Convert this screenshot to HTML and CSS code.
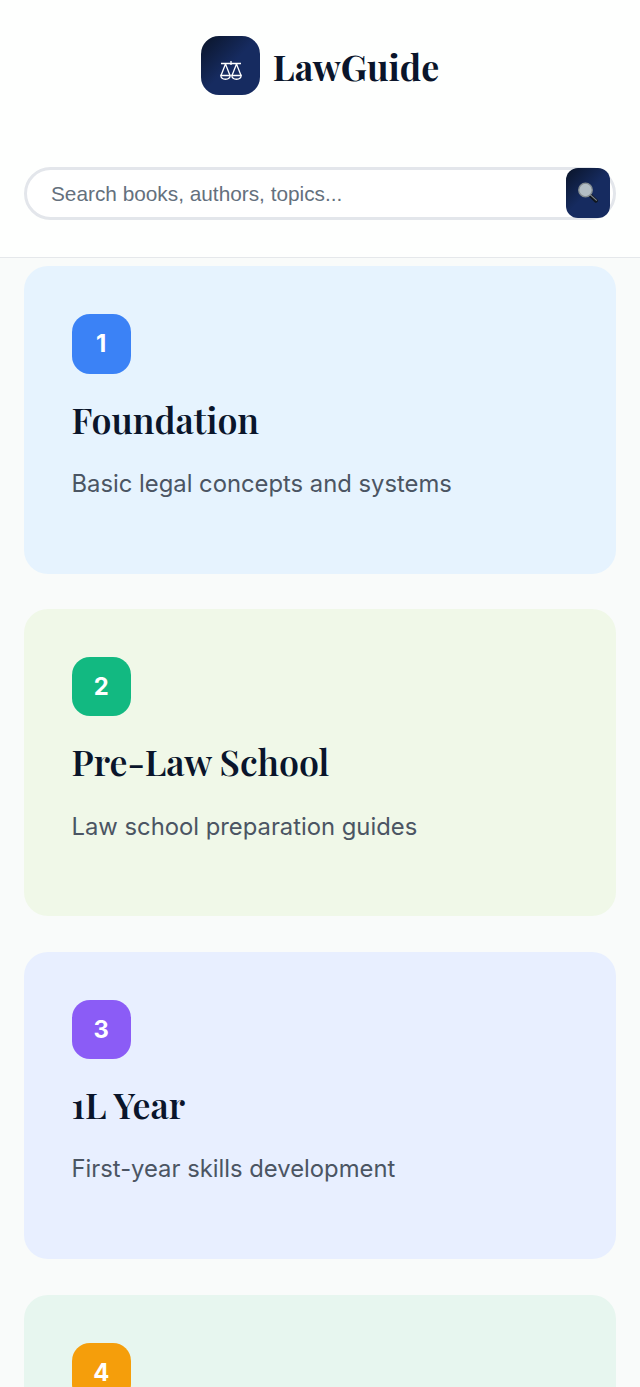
FILE: index.html
```html
<!DOCTYPE html>
<html lang="en">
<head>
<meta charset="utf-8">
<title>LawGuide</title>
<link rel="stylesheet" href="styles.css">
</head>
<body>
<div class="app">
<header class="header">
  <div class="brand">
    <div class="logo">
      <svg class="scales" viewBox="0 0 22 21" fill="none" stroke="#fff" stroke-width="1.3">
        <path d="M1 3.5H21M11 1V5M5.5 4L1 15.5M5.5 4L10 15.5M16.5 4L12 15.5M16.5 4L21 15.5"/>
        <path d="M.8 15.5H10.2C9.8 20.5 1.2 20.5 .8 15.5ZM11.8 15.5H21.2C20.8 20.5 12.2 20.5 11.8 15.5Z"/>
      </svg>
    </div>
    <span class="brand-name">LawGuide</span>
  </div>
  <div class="search">
    <span class="placeholder">Search books, authors, topics...</span>
    <div class="search-button">
      <svg class="lens" viewBox="0 0 22 22">
        <path d="M13.5 13.5L19 18.8" stroke="#10161d" stroke-width="3.8" stroke-linecap="round"/>
        <path d="M13 12.5L19.8 18.6" stroke="#79818a" stroke-width="1.2"/>
        <circle cx="8.5" cy="8" r="6.8" fill="#b3bec5" stroke="#858d91" stroke-width="1.3"/>
      </svg>
    </div>
  </div>
</header>
<main class="stages">
  <section class="card foundation">
    <div class="badge">1</div>
    <h2 class="title">Foundation</h2>
    <p class="description">Basic legal concepts and systems</p>
  </section>
  <section class="card prelaw">
    <div class="badge">2</div>
    <h2 class="title">Pre-Law School</h2>
    <p class="description">Law school preparation guides</p>
  </section>
  <section class="card first-year">
    <div class="badge">3</div>
    <h2 class="title">1L Year</h2>
    <p class="description">First-year skills development</p>
  </section>
  <section class="card fourth">
    <div class="badge">4</div>
  </section>
</main>
</div>
</body>
</html>
```
FILE: styles.css
```css
* { box-sizing: border-box; }
body {
  margin: 0;
  background: #f9fbfa;
  font-family: Inter, sans-serif;
}
.app {
  height: 1387px;
  overflow: hidden;
}
.header {
  height: 257.5px;
  padding: 35.7px 24px 0;
  background: #fefffe;
  border-bottom: 1.5px solid #e5e8eb;
}
.brand {
  display: flex;
  justify-content: center;
  gap: 12.5px;
  height: 60px;
}
.logo {
  display: flex;
  justify-content: center;
  width: 59.5px;
  height: 59.5px;
  padding-top: 24.7px;
  border-radius: 18px;
  background: linear-gradient(135deg, #0a1428 0%, #162b60 50%);
}
.scales { width: 22px; height: 21px; }
.brand-name {
  color: #0a152b;
  font: bold 35.7px/60px "Playfair Display", "Liberation Serif", serif;
}
.search {
  display: flex;
  justify-content: space-between;
  height: 53px;
  margin-top: 71.3px;
  padding: 0 3px 0 24px;
  background: #fff;
  border: 3px solid #e3e6eb;
  border-radius: 27px;
}
.placeholder {
  color: #64707d;
  font: 20.8px/47px "Liberation Sans", Arial, sans-serif;
}
.search-button {
  display: flex;
  justify-content: center;
  width: 44px;
  height: 50px;
  margin-top: -1.6px;
  padding-top: 13.6px;
  border-radius: 12px;
  background: linear-gradient(135deg, #0a1428 0%, #162b60 50%);
}
.lens { width: 22px; height: 22px; }
.stages {
  display: grid;
  gap: 35.4px;
  padding: 8.5px 24px 0;
}
.card {
  height: 307.5px;
  padding: 48px 47.5px;
  border-radius: 24px;
}
.foundation { background: #e6f3fe; }
.prelaw { background: #f0f8e8; }
.first-year { background: #e8efff; }
.fourth { background: #e7f6ef; }
.badge {
  width: 59.5px;
  height: 59.5px;
  border-radius: 18px;
  color: #fff;
  font-size: 23.8px;
  font-weight: 700;
  line-height: 60px;
  text-align: center;
}
.foundation .badge { background: #3b82f6; }
.prelaw .badge { background: #12b981; }
.first-year .badge { background: #8b5cf6; }
.fourth .badge { background: #f59e0b; }
.title {
  margin: 19px 0 0;
  color: #0a152b;
  font: 600 35.7px/52px "Playfair Display", "Liberation Serif", serif;
}
.description {
  margin: 20.2px 0 0;
  color: #4b5563;
  font-size: 23.8px;
  line-height: 38px;
}
```
